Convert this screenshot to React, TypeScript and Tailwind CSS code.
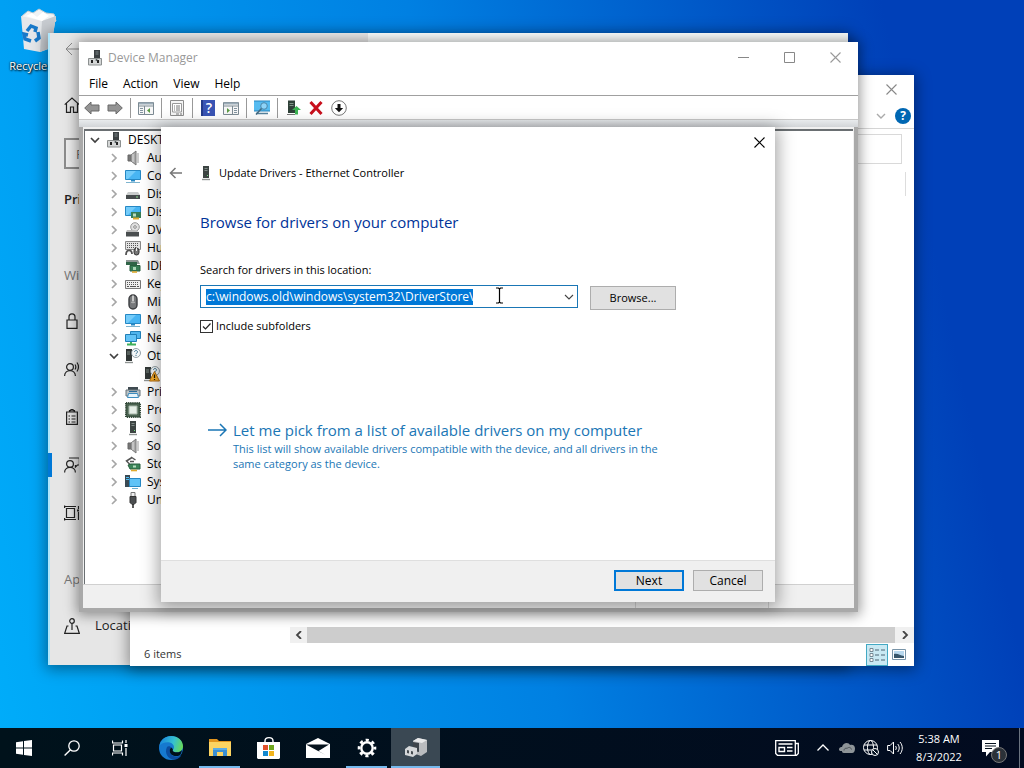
import { useEffect, useRef, useState } from 'react'
import type { ReactNode } from 'react'

type IconProps = { children: ReactNode; size?: string; box?: string }

function Icon({ children, size = 'w-4 h-4', box = '0 0 16 16' }: IconProps) {
  return (
    <svg className={`${size} shrink-0`} viewBox={box} fill="none" aria-hidden="true">
      {children}
    </svg>
  )
}

const Close = () => (
  <Icon size="w-[11px] h-[11px]" box="0 0 11 11">
    <path d="M.5 .5l10 10M10.500 .5l-10 10" stroke="currentColor" strokeWidth="1.100" />
  </Icon>
)

const Chevron = ({ open }: { open?: boolean }) => (
  <Icon size="w-[10px] h-[10px]" box="0 0 10 10">
    <path d={open ? 'M1 3l4 4 4-4' : 'M3 1l4 4-4 4'} stroke={open ? '#404040' : '#a6a6a6'} strokeWidth="1.700" />
  </Icon>
)

const Computer = () => (
  <Icon>
    <path d="M7 0h6v9H7z" fill="#3a3f42" />
    <path d="M8.500 2h3M8.500 4h3" stroke="#7d8789" />
    <path d="M1.500 8.500h13v6.500h-13z" fill="#d4d6d6" stroke="#8c9090" />
    <path d="M4 10h2v3H4zM10 10h2v3h-2z" fill="#222" />
    <circle cx="9.500" cy="10" r="1" fill="#4f5759" />
  </Icon>
)

const Speaker = () => (
  <Icon>
    <path d="M3 5h3v6H3z" fill="#777" stroke="#666" />
    <path d="M6 5l5-4v14l-5-4z" fill="#aaa" stroke="#777" />
    <path d="M8 4v8" stroke="#ddd" />
    <path d="M13 3v10" stroke="#999" />
  </Icon>
)

const Screen = () => (
  <>
    <path d="M.5 2.500h15v9H.5z" fill="#48b5f3" stroke="#2688c4" />
    <path d="M1 3h10l-8 8H1z" fill="#74ccfa" />
  </>
)

const Monitor = () => (
  <Icon>
    <Screen />
    <path d="M6 12h4v1.500H6z" fill="#2688c4" />
    <path d="M1 14.500h14" stroke="#7eb4cf" />
  </Icon>
)

const Disk = () => (
  <Icon>
    <path d="M3 6h10l2 3H1z" fill="#c9cccc" />
    <path d="M1 9h14v4H1z" fill="#454a4c" />
    <path d="M11 11h2" stroke="#8fe08f" />
  </Icon>
)

const Display = () => (
  <Icon>
    <Screen />
    <path d="M6 8h10v6H6z" fill="#377d55" />
    <path d="M8 9.500h3v3H8z" fill="#b9dcc0" />
    <path d="M8 14.500h6" stroke="#e0aa2e" strokeWidth="2" />
  </Icon>
)

const Dvd = () => (
  <Icon>
    <circle cx="10" cy="5" r="4.300" fill="#e1e1e1" stroke="#999" />
    <circle cx="10" cy="5" r="1.300" fill="#fff" stroke="#888" />
    <path d="M2 8h7l5 2H1z" fill="#bbb" />
    <path d="M1 10h13v4.500H1z" fill="#4a4e50" />
  </Icon>
)

const Hid = () => (
  <Icon>
    <path d="M.5 1.500h15v8H.5z" fill="#e4e4e4" stroke="#888" />
    <path d="M2 3.500h12M2 5.500h12M2 7.500h9" stroke="#555" strokeDasharray="1 1" />
    <path d="M1 15c0-6 6-6 6-1" stroke="#555" strokeWidth="1.800" />
    <rect x="9" y="8" width="5" height="7" rx="2.500" fill="#777" stroke="#333" />
    <path d="M11.500 8v3" stroke="#eee" />
  </Icon>
)

const Ide = () => (
  <Icon>
    <path d="M1 2h12l2 4H1z" fill="#8e9695" />
    <path d="M1 4h11v3H1z" fill="#2f6447" />
    <path d="M5 7.500h10v5.500H5z" fill="#377d55" stroke="#285e3e" />
    <path d="M8 9h3v3H8z" fill="#a9d4b5" />
    <path d="M7 14h5" stroke="#dba72f" strokeWidth="1.600" />
  </Icon>
)

const Keyboard = () => (
  <Icon>
    <path d="M.5 4.500h15v8H.5z" fill="#eee" stroke="#777" />
    <path d="M2 6.500h12M2 8.500h12" stroke="#555" strokeDasharray="1 1" />
    <path d="M2 10.500h2M5 10.500h6M12 10.500h2" stroke="#555" />
  </Icon>
)

const Mouse = () => (
  <Icon>
    <rect x="4" y="1" width="8" height="14" rx="4" fill="#77797b" stroke="#3b3d40" strokeWidth="1.400" />
    <path d="M8 1.500v6" stroke="#ddd" strokeWidth="1.600" />
    <path d="M6 8c1 1 3 1 4 0" stroke="#bbb" />
  </Icon>
)

const Network = () => (
  <Icon>
    <path d="M5.500 1.500h10v7h-10z" fill="#50b4ec" stroke="#207fb7" />
    <path d="M.5 4.500h11v7H.5z" fill="#63c3f6" stroke="#207fb7" />
    <path d="M6 12v2M2 14.500h9" stroke="#3eaf5b" strokeWidth="2" />
  </Icon>
)

const Tower = () => (
  <Icon>
    <path d="M5 1h6v12H5z" fill="#3c4442" />
    <path d="M6.500 3.500h3M6.500 5.500h3" stroke="#7f8a86" />
    <path d="M9 10.500h1" stroke="#6fe07e" />
    <path d="M4 14.500h8" stroke="#8f9492" strokeWidth="1.400" />
  </Icon>
)

const Unknown = ({ warn }: { warn?: boolean }) => (
  <Icon>
    <path d="M1 1h6v12H1z" fill="#303635" />
    <path d="M2 4h3M2 6h3" stroke="#7f8a86" />
    <path d="M0 14.500h8" stroke="#8f9492" strokeWidth="1.400" />
    <circle cx="11" cy="5" r="4.500" fill="#f4f7f8" stroke="#7d8e96" strokeWidth=".8" />
    <path d="M9.500 4c0-2 3-2 3 0 0 1-1.500 1-1.500 2.200M11 7v1" stroke="#3a7190" />
    {warn && (
      <>
        <path d="M10.500 5.500L15.500 15h-10z" fill="#fdb32c" stroke="#b36d10" />
        <path d="M10.500 8.500v3.500M10.500 13v1" stroke="#2b1b00" strokeWidth="1.300" />
      </>
    )}
  </Icon>
)

const Printer = () => (
  <Icon>
    <path d="M3 3h10v3H3z" fill="#3f4a50" />
    <path d="M1 6h14v6H1z" fill="#b9c2c7" stroke="#68747b" />
    <path d="M3.500 9.500h9l1 4h-11z" fill="#e6f4fb" stroke="#3c8dbf" />
    <path d="M4 7.500h8" stroke="#2b6e9a" />
  </Icon>
)

const Chip = () => (
  <Icon>
    <path d="M1 1h14v14H1z" fill="#4a6350" stroke="#344a3a" strokeWidth="2" strokeDasharray="1.300 .8" />
    <path d="M4 4h8v8H4z" fill="#e5eee6" stroke="#a6b7a9" />
  </Icon>
)

const Storage = () => (
  <Icon>
    <path d="M7 1.500L1.500 5 6 9.500M6 1l4.500 3M5 5.500h4" stroke="#555" strokeWidth="1.500" />
    <path d="M3 9l3-1h9v5H5z" fill="#3b8558" stroke="#285e3e" />
    <path d="M8 9.500h3v2H8z" fill="#b5dcc0" />
    <path d="M6 14.500h6" stroke="#e0aa2e" strokeWidth="1.600" />
  </Icon>
)

const System = () => (
  <Icon>
    <path d="M0 1h5v12H0z" fill="#3a4a54" />
    <path d="M1 3.500h3M1 5.500h3" stroke="#50bdf2" />
    <path d="M4.500 4.500h11v8h-11z" fill="#60c3f7" stroke="#2688c4" />
    <path d="M7 14.500h6" stroke="#6aaed0" />
  </Icon>
)

const Usb = () => (
  <Icon>
    <path d="M6 .5h4v4H6z" fill="#eee" stroke="#777" />
    <path d="M5 4.500h6v6l-2 2H7l-2-2z" fill="#4b4e50" stroke="#333" />
    <path d="M8 12v4" stroke="#333" strokeWidth="1.600" />
  </Icon>
)

const TREE = [
  { label: 'Audio inputs and outputs', icon: <Speaker /> },
  { label: 'Computer', icon: <Monitor /> },
  { label: 'Disk drives', icon: <Disk /> },
  { label: 'Display adapters', icon: <Display /> },
  { label: 'DVD/CD-ROM drives', icon: <Dvd /> },
  { label: 'Human Interface Devices', icon: <Hid /> },
  { label: 'IDE ATA/ATAPI controllers', icon: <Ide /> },
  { label: 'Keyboards', icon: <Keyboard /> },
  { label: 'Mice and other pointing devices', icon: <Mouse /> },
  { label: 'Monitors', icon: <Monitor /> },
  { label: 'Network adapters', icon: <Network /> },
  { label: 'Other devices', icon: <Unknown />, open: true },
  { label: 'Print queues', icon: <Printer /> },
  { label: 'Processors', icon: <Chip /> },
  { label: 'Software devices', icon: <Tower /> },
  { label: 'Sound, video and game controllers', icon: <Speaker /> },
  { label: 'Storage controllers', icon: <Storage /> },
  { label: 'System devices', icon: <System /> },
  { label: 'Universal Serial Bus controllers', icon: <Usb /> },
]

function RecycleBin() {
  return (
    <div className="absolute left-0 top-2 w-[76px] flex flex-col items-center">
      <Icon size="w-10 h-12" box="0 0 40 48">
        <path d="M4 8l6-5 5 2 6-4 7 4 8 1 2 7-5 4H7z" fill="#f0f3f5" stroke="#c2ccd2" />
        <path d="M3 8l21 5 14-5-5 32-11 4-16-3z" fill="#e4e7ea" />
        <path d="M24 13l14-5-5 32-11 4z" fill="#c8ccd1" />
        <path d="M8 8l6-3 5 4 6-5 6 4-7 5z" fill="#fff" />
        <path d="M9 23l4-5 5 2-1 4M20 24l1 6-4 3M13 33l-6-2-1-5 4 1" stroke="#1779c9" strokeWidth="3.500" />
      </Icon>
      <span className="mt-[2px] text-[11px] leading-4 text-white [text-shadow:1px_1px_2px_#000,0_0_2px_#000]">Recycle Bin</span>
    </div>
  )
}

function NavIcon({ children }: { children: ReactNode }) {
  return (
    <Icon size="w-4 h-4" box="0 0 16 16">
      <g stroke="#222" strokeWidth="1.200">{children}</g>
    </Icon>
  )
}

const SETTINGS_NAV = [
  <><path d="M3 7h10v8.400H3zM5 7V4c0-4.200 6-4.200 6 0v3" /></>,
  <><circle cx="6" cy="6" r="3.400" /><path d="M.6 15c0-7.200 10.800-7.200 10.800 0M11 3.500c1 1.500 1 3.500 0 5M13 1.500c2 3 2 6 0 9" /></>,
  <><path d="M2.600 3h10.800v12.400H2.600zM5.500 3V1.600h1.500V.6h2v1h1.500V3" /><path d="M4.500 7h1.500M7.500 7h4M4.500 10h1.500M7.500 10h4M4.500 13h1.500M7.500 13h4" /></>,
  <><circle cx="6" cy="7" r="3.400" /><path d="M.6 15.500c0-6.800 10.800-6.800 10.800 0M5 1h10.400v7h-2l-2 2V8" /></>,
  <><path d="M2.500 3.500h8v9h-8zM.6 .6v2.400M.6 13v2.400M0 1.500h12M0 14.500h12M14.500 1v3M14.500 7v8" /><path d="M13 5.500h3" strokeWidth="2" /></>,
]

function SettingsWindow() {
  return (
    <section
      aria-label="Settings"
      className="absolute left-[48px] top-[33px] w-[800px] h-[632px] bg-[#e6e6e6] shadow-[inset_2px_0_0_#aee6fb,0_2px_14px_2px_rgba(0,0,0,0.4)] overflow-hidden"
    >
      <div className="flex h-9">
        <div className="w-80 pl-4 pt-2 text-[#888]">
          <Icon>
            <path d="M8 2L2 8l6 6M2 8h14" stroke="currentColor" />
          </Icon>
        </div>
        <div className="grow bg-[#f8fbfa]" />
      </div>
      <div className="flex flex-col pl-4 pt-7 text-[13px] text-[#222]">
        <NavIcon><path d="M.7 7.600L8 1l7.300 6.600M2.500 6.500v8.800h4V10h3v5.300h4V6.500" /></NavIcon>
        <input
          aria-label="Find a setting"
          className="mt-[25px] w-60 h-[31px] border-2 border-[#8c8c8c] bg-[#ececec] px-[10px] text-[#666] outline-none"
          defaultValue="F"
        />
        <h2 className="mt-5 h-5 leading-5 font-semibold">Privacy</h2>
        <p className="mt-[56px] h-5 leading-5 text-[#777]">Windows permissions</p>
        <ul className="mt-3">
          {SETTINGS_NAV.map((icon, i) => (
            <li key={i} className="relative flex items-center h-12">
              {i === 3 && <span className="absolute -left-4 w-1 h-6 bg-[#0078d7]" />}
              <NavIcon>{icon}</NavIcon>
            </li>
          ))}
        </ul>
        <p className="mt-8 h-5 leading-5 text-[#777]">App permissions</p>
        <a href="#location" className="mt-[13px] flex items-center gap-[15px] h-12">
          <NavIcon>
            <circle cx="8" cy="3" r="2.300" />
            <path d="M8 5.500V12M4.500 8H3L.7 15.300h14.600L13 8h-1.500" />
          </NavIcon>
          Location
        </a>
      </div>
    </section>
  )
}

function ExplorerWindow() {
  return (
    <section
      aria-label="File Explorer"
      className="absolute left-[130px] top-[75px] w-[784px] h-[591px] flex flex-col bg-white text-xs text-[#333] shadow-[0_2px_14px_2px_rgba(0,0,0,0.4)]"
    >
      <div className="flex justify-end h-7">
        <button aria-label="Close" className="w-[46px] flex items-center justify-center text-[#888]"><Close /></button>
      </div>
      <div className="flex justify-end items-center gap-[9px] pr-[3px] h-[26px] border-b border-[#d5d5d5]">
        <button aria-label="Expand the ribbon">
          <Icon size="w-[10px] h-[10px]" box="0 0 10 10"><path d="M1 3l4 4 4-4" stroke="#aaa" strokeWidth="1.400" /></Icon>
        </button>
        <button aria-label="Help" className="w-4 h-4 rounded-full bg-[#0067b3] text-white font-bold leading-4">?</button>
      </div>
      <div className="flex justify-end pr-3 pt-[5px]">
        <input aria-label="Search" className="w-40 h-[30px] border border-[#d9d9d9] outline-none" />
      </div>
      <div className="mt-2 mr-2 self-end w-px h-6 bg-[#ddd]" />
      <div className="grow" />
      <div className="ml-[160px] flex items-stretch h-4 bg-[#f0f0f0]">
        <button aria-label="Scroll left" className="w-[17px] flex items-center justify-center">
          <Icon size="w-2 h-2" box="0 0 8 8"><path d="M6 0L2 4l4 4" stroke="#444" strokeWidth="1.800" /></Icon>
        </button>
        <div className="grow bg-[#cdcdcd]" />
        <button aria-label="Scroll right" className="w-[19px] flex items-center justify-center">
          <Icon size="w-2 h-2" box="0 0 8 8"><path d="M2 0l4 4-4 4" stroke="#444" strokeWidth="1.800" /></Icon>
        </button>
      </div>
      <div className="flex items-center h-[23px] pl-[14px] pr-1">
        <span className="text-[11px]">6 items</span>
        <button aria-label="Details" className="ml-auto w-[22px] h-[22px] flex items-center justify-center border border-[#43a9c4] bg-[#c9e9f3]">
          <Icon>
            <path d="M1 1.500h3v3H1zM1 6.500h3v3H1zM1 11.500h3v3H1z" fill="#fff" stroke="#6b7f8b" strokeWidth=".9" />
            <path d="M6 3h4M12 3h4M6 8h4M12 8h4M6 13h4M12 13h4" stroke="#4c6474" />
          </Icon>
        </button>
        <button aria-label="Large icons" className="w-[22px] h-[22px] flex items-center justify-center">
          <Icon size="w-[14px] h-3" box="0 0 14 12">
            <path d="M.5 .5h13v10H.5z" fill="#fff" stroke="#7894a8" />
            <path d="M2 2h10v7H2z" fill="#b8d8ee" />
            <path d="M2 5c4-1 6 2 10 2v2H2z" fill="#38566b" />
          </Icon>
        </button>
      </div>
    </section>
  )
}

const Panel = ({ flip }: { flip?: boolean }) => (
  <Icon>
    <path d="M.5 2.500h15v12H.5z" fill="#f7f7f7" stroke="#7c8a93" />
    <path d="M1 3.500h14" stroke="#9aabb6" strokeWidth="2" />
    <path d="M1 6h14" stroke="#7c8a93" />
    {flip ? (
      <>
        <path d="M9.500 6v8" stroke="#7c8a93" />
        <path d="M4 8l3 2.500L4 13z" fill="#5a9a43" />
        <path d="M11 8.500h3M11 10.500h3M11 12.500h3" stroke="#8394a0" />
      </>
    ) : (
      <>
        <path d="M6.500 6v8" stroke="#7c8a93" />
        <path d="M12 8l-3 2.500L12 13z" fill="#5a9a43" />
        <path d="M2 8.500h3M2 10.500h3M2 12.500h3" stroke="#8394a0" />
      </>
    )}
  </Icon>
)

const ARROW = 'M.7 8L7 2V5h8v6H7v3z'

const TOOLBAR: { name: string; icon?: ReactNode }[] = [
  { name: 'Back', icon: <Icon><path d={ARROW} fill="#949494" stroke="#686868" /></Icon> },
  { name: 'Forward', icon: <Icon><path d={ARROW} fill="#949494" stroke="#686868" transform="matrix(-1 0 0 1 16 0)" /></Icon> },
  { name: 'sep1' },
  { name: 'Show/Hide Console Tree', icon: <Panel /> },
  { name: 'sep2' },
  {
    name: 'Properties',
    icon: (
      <Icon>
        <path d="M1.500 .5h13v15h-13z" fill="#f5f5f5" stroke="#8c8c8c" />
        <path d="M3.500 3.500h9v8.500h-9z" fill="#fff" stroke="#9a9a9a" />
        <path d="M5 6h1M7 6h4M5 8h1M7 8h4M5 10h1M7 10h4M7 14h3M11 14h2" stroke="#777" />
      </Icon>
    ),
  },
  { name: 'sep3' },
  {
    name: 'Help',
    icon: (
      <span className="flex w-[14px] h-4 mx-px items-center justify-center bg-[#3954b4] border-l-2 border-[#233a8a] text-white text-sm leading-4 font-semibold">?</span>
    ),
  },
  { name: 'Show/Hide Action Pane', icon: <Panel flip /> },
  { name: 'sep4' },
  {
    name: 'Scan for hardware changes',
    icon: (
      <Icon>
        <path d="M-.5 1h17v10h-17z" fill="#56bbf0" stroke="#2784bd" />
        <path d="M2 13.500h12" stroke="#55809c" strokeWidth="1.500" />
        <circle cx="10" cy="6" r="3.300" fill="#8fd4f8" stroke="#4c87a9" />
        <path d="M7.500 8.500L2 14.500" stroke="#466b82" strokeWidth="1.600" />
      </Icon>
    ),
  },
  { name: 'sep5' },
  {
    name: 'Update driver',
    icon: (
      <Icon>
        <path d="M3 .5h7V13H3z" fill="#2f4138" />
        <path d="M4.500 3.500h4M4.500 5.500h4" stroke="#7f9487" />
        <path d="M2 14.500h8" stroke="#777" />
        <path d="M11.500 6l4.500 4h-3v4.500h-3V10H7z" fill="#3cb453" />
      </Icon>
    ),
  },
  {
    name: 'Uninstall device',
    icon: <Icon><path d="M2.500 2l11 12M13.500 2l-11 12" stroke="#c8101d" strokeWidth="3" /></Icon>,
  },
  {
    name: 'Disable device',
    icon: (
      <Icon>
        <circle cx="8" cy="8" r="7.300" fill="#fff" stroke="#777" />
        <path d="M6.500 4h3v4h2.700L8 12.300 3.800 8h2.700z" fill="#111" />
      </Icon>
    ),
  },
]

function DeviceManager() {
  return (
    <section
      aria-label="Device Manager"
      className="absolute left-[79px] top-[42px] w-[779px] h-[570px] flex flex-col bg-[#a9a9a9] text-xs text-black shadow-[0_1px_12px_2px_rgba(0,0,0,0.4)]"
    >
      <header className="flex items-center h-[31px] bg-white pl-2 text-[#999]">
        <Computer />
        <h1 className="ml-[5px]">Device Manager</h1>
        <div className="ml-auto flex h-full">
          <button aria-label="Minimize" className="w-[46px] flex items-center justify-center">
            <Icon size="w-[11px] h-[11px]" box="0 0 11 11"><path d="M0 5.500h11" stroke="#888" /></Icon>
          </button>
          <button aria-label="Maximize" className="w-[46px] flex items-center justify-center">
            <Icon size="w-[11px] h-[11px]" box="0 0 11 11"><path d="M.5 .5h10v10H.5z" stroke="#888" /></Icon>
          </button>
          <button aria-label="Close" className="w-[46px] flex items-center justify-center"><Close /></button>
        </div>
      </header>
      <nav className="flex items-center gap-[15px] h-[23px] bg-white pl-[10px] border-b border-[#a0a0a0]">
        {['File', 'Action', 'View', 'Help'].map((m) => (
          <button key={m}>{m}</button>
        ))}
      </nav>
      <div className="flex items-center gap-[7px] h-[23px] bg-white pl-[5px]">
        {TOOLBAR.map((t) =>
          t.icon ? (
            <button key={t.name} aria-label={t.name}>{t.icon}</button>
          ) : (
            <span key={t.name} className="w-px h-5 bg-[#999]" />
          ),
        )}
      </div>
      <div className="h-2 bg-linear-to-b from-[#e8ebed] to-[#d2d5d8] border-t border-[#c8c8c8]" />
      <div className="grow mx-1 mb-1 flex flex-col bg-[#f0f0f0] overflow-hidden">
        <div className="grow mt-[2px] mx-px border-t-2 border-l border-[#6a6f72] bg-white">
          <ul className="w-[84px] overflow-hidden whitespace-nowrap">
            <li className="flex items-center h-[18px] pl-[5px]">
              <Chevron open />
              <span className="mx-[6px]"><Computer /></span>
              DESKTOP
            </li>
            {TREE.map((node) => (
              <li key={node.label}>
                <div className="flex items-center h-[18px] pl-6">
                  <Chevron open={node.open} />
                  <span className="mx-[6px]">{node.icon}</span>
                  {node.label}
                </div>
                {node.open && (
                  <div className="flex items-center h-[18px] pl-[59px]"><Unknown warn /></div>
                )}
              </li>
            ))}
          </ul>
        </div>
        <footer className="flex justify-end h-6 border-t border-[#d0d0d0]">
          <span className="w-[133px] border-l border-[#d0d0d0]" />
          <span className="w-[86px] border-l border-[#d0d0d0]" />
        </footer>
      </div>
    </section>
  )
}

function UpdateDialog() {
  const [path, setPath] = useState('c:\\windows.old\\windows\\system32\\DriverStore\\')
  const [subfolders, setSubfolders] = useState(true)
  const pathRef = useRef<HTMLInputElement>(null)

  useEffect(() => {
    pathRef.current?.focus()
    pathRef.current?.select()
  }, [])

  return (
    <section
      role="dialog"
      aria-label="Update Drivers"
      className="absolute left-[161px] top-[127px] w-[614px] h-[475px] flex flex-col bg-white text-[11px] text-black shadow-[0_3px_16px_3px_rgba(0,0,0,0.35)]"
    >
      <div className="flex justify-end h-[30px]">
        <button aria-label="Close" className="w-8 flex items-center justify-center"><Close /></button>
      </div>
      <div className="flex items-center h-8 pl-2">
        <button aria-label="Back" className="text-[#777]">
          <Icon size="w-[14px] h-[14px]" box="0 0 14 14"><path d="M6.500 2L1.500 7l5 5M1.500 7H13" stroke="currentColor" strokeWidth="1.500" /></Icon>
        </button>
        <span className="ml-[15px] mr-[5px]"><Tower /></span>
        Update Drivers - Ethernet Controller
      </div>
      <div className="grow pl-[39px] pr-[99px]">
        <h2 className="mt-[21px] leading-6 text-[15px] text-[#003399]">Browse for drivers on your computer</h2>
        <label htmlFor="path" className="mt-7 block leading-4">Search for drivers in this location:</label>
        <div className="mt-[7px] flex items-start gap-3">
          <div className="grow flex items-center h-[23px] border border-[#1a76b5] bg-white pl-[5px]">
            <input
              id="path"
              ref={pathRef}
              value={path}
              onChange={(e) => setPath(e.target.value)}
              className="grow min-w-0 h-4 leading-4 text-xs outline-none selection:bg-[#0078d7] selection:text-white"
            />
            <button aria-label="Previous locations" className="w-4 h-4 flex items-center justify-center">
              <Icon size="w-[10px] h-[10px]" box="0 0 10 10"><path d="M1 3l4 4 4-4" stroke="#444" strokeWidth="1.100" /></Icon>
            </button>
          </div>
          <button className="mt-px w-[86px] h-6 border border-[#adadad] bg-[#e1e1e1]">Browse...</button>
        </div>
        <label className="mt-2 flex items-center gap-[3px] leading-4">
          <span className="relative flex">
            <input
              type="checkbox"
              checked={subfolders}
              onChange={(e) => setSubfolders(e.target.checked)}
              className="appearance-none w-[13px] h-[13px] border border-[#333] bg-white"
            />
            {subfolders && (
              <svg className="absolute inset-0 w-[13px] h-[13px] pointer-events-none" viewBox="0 0 13 13" fill="none">
                <path d="M3 6.500l2.500 2.500L10.500 3.500" stroke="#222" strokeWidth="1.200" />
              </svg>
            )}
          </span>
          Include subfolders
        </label>
        <button className="mt-[85px] ml-2 flex items-start gap-[6px] text-left text-[#1a76b5]">
          <span className="mt-[3px]">
            <Icon size="w-[19px] h-4" box="0 0 19 16"><path d="M0 8h18M12 2l6 6-6 6" stroke="currentColor" strokeWidth="1.500" /></Icon>
          </span>
          <span className="block">
            <span className="block text-[15px] leading-[22px]">Let me pick from a list of available drivers on my computer</span>
            <span className="block leading-[15px]">
              This list will show available drivers compatible with the device, and all drivers in the same category as the device.
            </span>
          </span>
        </button>
      </div>
      <footer className="flex items-start justify-end gap-[9px] h-[42px] pt-[9px] pr-3 border-t border-[#dfdfdf] bg-[#f0f0f0] text-xs">
        <button className="w-[70px] h-[21px] border-2 border-[#0078d7] bg-[#e1e1e1] leading-4">Next</button>
        <button className="w-[70px] h-[21px] border border-[#adadad] bg-[#e1e1e1] leading-4">Cancel</button>
      </footer>
      {/* text cursor */}
      <svg className="absolute left-[334px] top-[160px] w-[9px] h-[17px]" viewBox="0 0 9 17" fill="none" aria-hidden="true">
        <path d="M1 1h2.500l1 1 1-1H8M4.500 2v13M1 16h2.500l1-1 1 1H8" stroke="#000" strokeWidth="1.200" />
      </svg>
    </section>
  )
}

const APPS: { name: string; icon: ReactNode; running?: boolean; active?: boolean }[] = [
  {
    name: 'Microsoft Edge',
    icon: (
      <Icon size="w-6 h-6" box="0 0 24 24">
        <defs>
          <linearGradient id="edgeTop" x1="2" y1="5" x2="23" y2="12" gradientUnits="userSpaceOnUse">
            <stop stopColor="#1b8bdc" />
            <stop offset=".55" stopColor="#35c1d0" />
            <stop offset="1" stopColor="#68d957" />
          </linearGradient>
        </defs>
        <circle cx="12" cy="12" r="12" fill="#1679cf" />
        <path d="M.3 10C1.500 3.500 6.500 0 12.200 0 19 0 24 4.800 24 10.300c0 3.700-2.800 6-6 6-2.700 0-4.300-1-4.300-1.900 0-.7 1.300-1.200 1.300-3.200 0-2.700-2.700-4.900-6.200-4.900C5 6.300 1.700 7.700.3 10z" fill="url(#edgeTop)" />
        <path d="M8 11c-3 6 1 12.500 7.500 12.500 3 0 5.500-2 6.700-4-4.500 2.200-10.200 1-11.500-3.500-.5-2 .3-3.700 1.500-4.500-1-1.500-3.200-1.800-4.200-.5z" fill="#0b4da0" />
        <path d="M13.700 14.500c0 .9 1.600 1.800 4.300 1.800 2 0 3.800-.9 5-2.300-.3 2-.9 3.800-2 5.200-4.500 2-9.700.5-10.300-3.900-.2-1.700.5-3.100 1.700-3.800 1 .8 2 2 1.300 3z" fill="#001019" />
      </Icon>
    ),
  },
  {
    name: 'File Explorer',
    running: true,
    icon: (
      <Icon size="w-[22px] h-[22px]" box="0 0 22 22">
        <path d="M0 2h8l2 2h12v4H0z" fill="#e2951d" />
        <path d="M0 5h22v14H0z" fill="#fcd462" />
        <path d="M4 11h14v8h-4v-4H8v4H4z" fill="#3b8fd2" />
        <path d="M4 11h14v2H4z" fill="#5aabe5" />
      </Icon>
    ),
  },
  {
    name: 'Microsoft Store',
    icon: (
      <Icon size="w-6 h-6" box="0 0 24 24">
        <path d="M8 7V5c0-4.500 8-4.500 8 0v2" stroke="#fff" strokeWidth="1.400" />
        <path d="M0 6h23v16l-1 1H1l-1-1z" fill="#fff" />
        <path d="M6 9h5v5H6z" fill="#e2512b" />
        <path d="M12 9h5v5h-5z" fill="#6fa71f" />
        <path d="M6 15h5v5H6z" fill="#1288cf" />
        <path d="M12 15h5v5h-5z" fill="#f2b41c" />
      </Icon>
    ),
  },
  {
    name: 'Mail',
    icon: (
      <Icon size="w-6 h-5" box="0 0 24 20">
        <path d="M0 6l12-6 12 6v14H0z" fill="#fff" />
        <path d="M0 6.500h23L12.500 13l7 4z" fill="#06131d" />
      </Icon>
    ),
  },
  {
    name: 'Settings',
    running: true,
    icon: (
      <Icon size="w-5 h-5" box="0 0 20 20">
        <circle cx="10" cy="10" r="5.700" stroke="#fff" strokeWidth="2.400" />
        <circle cx="10" cy="10" r="8" stroke="#fff" strokeWidth="2.600" strokeDasharray="3.140 3.143" strokeDashoffset="1.570" />
      </Icon>
    ),
  },
  {
    name: 'Device Manager',
    running: true,
    active: true,
    icon: (
      <Icon size="w-[22px] h-[22px]" box="0 0 22 22">
        <path d="M8 4l5-3 9 2v12l-6 4-8-3z" fill="#b9bcbf" />
        <path d="M8 4l5-3 9 2-5 3z" fill="#e8e9ea" />
        <path d="M8 5l6 1v9l-6-1z" fill="#3e454b" />
        <path d="M0 12l4-3 8 2v6l-4 3-8-2z" fill="#d5d8da" />
        <path d="M2 13l2 .5v3L2 16zM6 14l2 .5v3L6 17z" fill="#454b50" />
      </Icon>
    ),
  },
]

function Taskbar() {
  return (
    <footer className="absolute inset-x-0 bottom-0 h-10 flex items-stretch bg-linear-to-r from-[#00121b] to-[#020b20] text-white text-[11px]">
      <button aria-label="Start" className="w-12 flex items-center justify-center">
        <Icon><path d="M0 2.200l7-1v6.400H0zM8 1.100L16 0v7.600H8zM0 8.500h7v6.300l-7-1zM8 8.500h8V16l-8-1.100z" fill="#fff" /></Icon>
      </button>
      <button aria-label="Search" className="w-12 flex items-center justify-center">
        <Icon><circle cx="10" cy="6" r="5.200" stroke="#fff" strokeWidth="1.300" /><path d="M6.500 9.700L.6 15.500" stroke="#fff" strokeWidth="1.400" /></Icon>
      </button>
      <button aria-label="Task View" className="w-12 mr-[2px] flex items-center justify-center">
        <Icon>
          <path d="M.5 .5v2.500h10V.5M1.500 5h8v6h-8zM.5 15.500V13h10v2.500M14 0v3M14 8v8" stroke="#fff" strokeWidth="1.200" />
          <path d="M12.500 4h3v3h-3z" fill="#fff" />
        </Icon>
      </button>
      {APPS.map((app) => (
        <button
          key={app.name}
          aria-label={app.name}
          className={`relative w-[49px] flex items-center justify-center ${app.active ? 'bg-[#3a4853]' : ''}`}
        >
          {app.icon}
          {app.running && (
            <span className={`absolute bottom-0 h-[2px] bg-[#76b9ed] ${app.active ? 'inset-x-0' : 'inset-x-1'}`} />
          )}
        </button>
      ))}
      <div className="ml-auto flex items-center">
        <button aria-label="News and interests" className="mr-4">
          <Icon size="w-6 h-4" box="0 0 24 16">
            <path d="M.7 .7h19.600v14.600H2.500L.7 13.500zM20.300 3.500h3v10l-1.800 1.800h-2" stroke="#fff" strokeWidth="1.300" />
            <path d="M3.500 4h14M12 7.500h5.500M12 11h5.500" stroke="#fff" strokeWidth="1.500" />
            <path d="M4 7.500h5.500v4H4z" stroke="#fff" strokeWidth="1.400" />
          </Icon>
        </button>
        <div className="flex items-center gap-2">
          <button aria-label="Show hidden icons">
            <Icon size="w-4 h-4"><path d="M2.500 10.500L8 5l5.500 5.500" stroke="#fff" strokeWidth="1.300" /></Icon>
          </button>
          <button aria-label="OneDrive">
            <Icon><path d="M0 10c0-3 2-3 3-3 1-5 7-5 8-2 3-1 5 1 5 3.500 0 2.500-1 4.500-3 4.500H5c-2 0-2-1.500-2-2H1z" fill="#8e9498" /><path d="M5 10.500c0-2 2-3 3-2 2-2 4-1 4.500 1" stroke="#4c5357" /></Icon>
          </button>
          <button aria-label="Network">
            <Icon>
              <g stroke="#fff">
                <circle cx="7.500" cy="7.500" r="7" />
                <ellipse cx="7.500" cy="7.500" rx="3" ry="7" />
                <path d="M1 5h13M1 10h13" />
              </g>
              <circle cx="12" cy="12" r="3.500" fill="#020f1e" stroke="#fff" />
              <path d="M9.700 9.700l4.600 4.600" stroke="#fff" />
            </Icon>
          </button>
          <button aria-label="Volume">
            <Icon>
              <path d="M.6 5.500h2.500L6.500 2v12L3.100 10.500H.6zM8.500 6c1 1 1 3 0 4M10.700 4c2 2.300 2 5.700 0 8M13 2c3 3.500 3 8.500 0 12" stroke="#fff" />
            </Icon>
          </button>
        </div>
        <div className="w-[72px] text-center leading-[18px]">
          <div>5:38 AM</div>
          <div>8/3/2022</div>
        </div>
        <button aria-label="Notifications" className="relative w-[44px] flex items-center pl-[7px]">
          <Icon size="w-[17px] h-[17px]" box="0 0 17 17">
            <path d="M0 0h17v12H8l-4 4.500V12H0z" fill="#fff" />
            <path d="M3 3.500h11M3 6h11M3 8.500h7" stroke="#06121f" />
          </Icon>
          <span className="absolute left-4 top-[7px] w-4 h-4 rounded-full border border-[#777] bg-[#2b3138] text-[11px] leading-[14px] text-center">1</span>
        </button>
        <span className="w-px h-10 mr-1 bg-[#6b7480]" />
      </div>
    </footer>
  )
}

export default function App() {
  return (
    <main className="relative h-screen w-full overflow-hidden bg-linear-[78deg] from-[#00adfa] via-[#0080e2] via-48% to-[#0040b8] to-88% font-['Open_Sans','Noto_Sans',sans-serif]">
      <RecycleBin />
      <SettingsWindow />
      <ExplorerWindow />
      <DeviceManager />
      <UpdateDialog />
      <Taskbar />
    </main>
  )
}
